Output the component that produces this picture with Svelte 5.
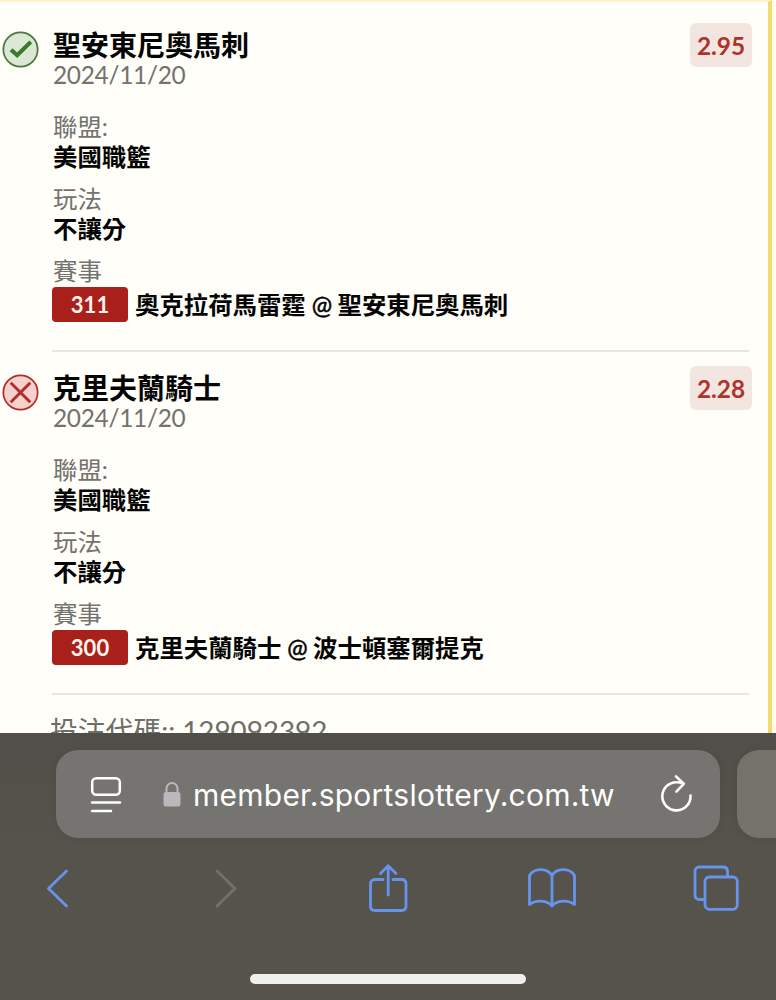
<script lang="ts">
    type Leg = {
        won: boolean;
        pick: string;
        date: string;
        league: string;
        play: string;
        code: string;
        away: string;
        home: string;
        odds: string;
    };

    const legs: Leg[] = [
        {
            won: true,
            pick: '聖安東尼奧馬刺',
            date: '2024/11/20',
            league: '美國職籃',
            play: '不讓分',
            code: '311',
            away: '奧克拉荷馬雷霆',
            home: '聖安東尼奧馬刺',
            odds: '2.95'
        },
        {
            won: false,
            pick: '克里夫蘭騎士',
            date: '2024/11/20',
            league: '美國職籃',
            play: '不讓分',
            code: '300',
            away: '克里夫蘭騎士',
            home: '波士頓塞爾提克',
            odds: '2.28'
        }
    ];
</script>

<div class="screen">
    <main class="slip">
        {#each legs as leg}
            <section class="leg">
                <svg class="status" class:lost={!leg.won} viewBox="0 0 36 36" aria-label={leg.won ? 'won' : 'lost'}>
                    <circle cx="18" cy="18" r="16.7" />
                    {#if leg.won}
                        <path class="check" d="M8.8 18.2 14.8 23.6 28 10.6" />
                    {:else}
                        <path d="M8.5 8.6 27.5 27.4M27.5 8.6 8.5 27.4" />
                    {/if}
                </svg>
                <div class="details">
                    <div class="head">
                        <div class="title">
                            <h2>{leg.pick}</h2>
                            <p class="date">{leg.date}</p>
                        </div>
                        <span class="odds">{leg.odds}</span>
                    </div>
                    <dl>
                        <dt>聯盟:</dt>
                        <dd>{leg.league}</dd>
                        <dt>玩法</dt>
                        <dd>{leg.play}</dd>
                        <dt>賽事</dt>
                        <dd class="match">
                            <span class="code">{leg.code}</span>
                            <span class="teams">{leg.away} <span class="at">@</span> {leg.home}</span>
                        </dd>
                    </dl>
                </div>
            </section>
        {/each}
        <p class="bet-code">投注代碼:: 129092392</p>
    </main>

    <footer class="browser">
        <div class="tabs">
            <div class="address">
                <svg class="reader" viewBox="0 0 32 38">
                    <rect x="2.2" y="2.2" width="27.6" height="16.6" rx="4" />
                    <path d="M2 26.5H30M2 35H21" />
                </svg>
                <svg class="lock" viewBox="0 0 18 26">
                    <rect x="0.5" y="11" width="17" height="14.5" rx="2.5" />
                    <path d="M3.5 12V7.5a5.5 5.5 0 0 1 11 0V12" />
                </svg>
                <span class="url">member.sportslottery.com.tw</span>
                <svg class="reload" viewBox="0 0 32 38">
                    <path d="M30.5 21.6A14.1 14.1 0 1 1 16.4 8.2Q20 8.2 23.6 9.8M16 2.4 23.8 9.8 16.4 17.6" />
                </svg>
            </div>
            <div class="next-tab"></div>
        </div>
        <nav class="tools">
            <svg class="back" viewBox="0 0 24 40"><path d="M20.5 3 2.5 20.5 20.5 38" /></svg>
            <svg class="forward" viewBox="0 0 24 40"><path d="M3 3 21 20.5 3 38" /></svg>
            <svg class="share" viewBox="0 0 40 50">
                <path d="M15 16.5H7Q2.5 16.5 2.5 21V43Q2.5 47.5 7 47.5H33.5Q38 47.5 38 43V21Q38 16.500 33.5 16.5H25" />
                <path d="M20.2 32V3M12.5 10.5 20.2 2.7 28 10.5" />
            </svg>
            <svg class="book" viewBox="0 0 50 42">
                <path d="M25 39C20 33 9 32.5 2.5 37.5V8.5C7 1 20 .5 25 8.5V39C30 33 41 32.5 47.5 37.5V8.5C43 1 30 .5 25 8.5" />
            </svg>
            <svg class="windows" viewBox="0 0 46 46">
                <path d="M11 34.5H6.5Q2 34.5 2 30V6.5Q2 2 6.5 2H30Q34.5 2 34.5 6.5V11" />
                <rect x="12" y="12" width="32.3" height="32.3" rx="4.5" />
            </svg>
        </nav>
        <div class="home-bar"></div>
    </footer>
</div>

<style>
    :global(body) {
        margin: 0;
        background: #55534b;
    }

    .screen {
        display: flex;
        flex-direction: column;
        width: 776px;
        height: 1000px;
        overflow: hidden;
        font-family: Lato, 'Noto Sans CJK TC', sans-serif;
        font-size: 24.4px;
        line-height: 30px;
    }

    h2,
    p,
    dl,
    dd {
        margin: 0;
    }

    svg {
        display: block;
        flex: none;
        fill: none;
    }

    .slip {
        box-sizing: border-box;
        width: 772px;
        height: 733px;
        padding: 7px 20px 0 2px;
        overflow: hidden;
        background: #fffef8;
        border-top: 2px solid #fff0d2;
        border-right: 4px solid #f3dc6c;
        box-shadow: 5px 0 0 #fffdf0;
        flex: none;
    }

    .leg {
        display: flex;
        gap: 13px;
        height: 343px;
    }

    .status {
        width: 37px;
        height: 37px;
        margin-top: 22px;
        stroke: #487a3c;
        stroke-width: 1.7;
    }

    .status circle {
        fill: #dce7d6;
    }

    .status .check {
        stroke: #387b29;
        stroke-width: 4;
    }

    .status.lost {
        stroke: #b42c29;
    }

    .status.lost circle {
        fill: #f3d2ce;
    }

    .status.lost path {
        stroke-width: 2.8;
    }

    .details {
        box-sizing: border-box;
        width: 697px;
        height: 343px;
        padding-top: 20px;
        border-bottom: 2px solid #e7e6e1;
        flex: none;
    }

    .head {
        display: flex;
        justify-content: space-between;
        height: 83px;
    }

    .title,
    dt,
    dd {
        padding-left: 1px;
    }

    h2 {
        font-size: 28px;
        font-weight: 700;
        line-height: 32px;
        color: #050505;
    }

    .date {
        letter-spacing: -0.28px;
        line-height: 27px;
    }

    .date,
    dt {
        color: #72726f;
    }

    .odds {
        width: 62px;
        height: 44px;
        margin: -6px -3px 0 0;
        border-radius: 6px;
        background: #f3e6e1;
        color: #ad342c;
        font-weight: 700;
        line-height: 45px;
        text-align: center;
    }

    dd {
        margin-bottom: 12px;
        color: #050505;
        font-weight: 700;
    }

    .match {
        display: flex;
        align-items: center;
        gap: 7px;
        height: 35px;
        margin: 1px 0 0;
        padding: 0;
    }

    .code {
        width: 76px;
        height: 35px;
        border-radius: 4px;
        background: #a82019;
        color: #fff3ee;
        font-size: 22px;
        line-height: 36px;
        text-align: center;
    }

    .teams {
        padding-top: 1px;
    }

    .at {
        margin-right: -0.5px;
        font-weight: 400;
        -webkit-text-stroke: 0.5px #050505;
    }

    .bet-code {
        margin: 19px 0 0 48px;
        color: #6d6d6a;
        font-size: 27.8px;
        line-height: 34px;
        white-space: nowrap;
    }

    .browser {
        height: 267px;
        background: linear-gradient(#514f49, #55534b 45%, #56544a);
        flex: none;
    }

    .tabs {
        display: flex;
        gap: 17px;
        padding: 17px 0 0 56px;
    }

    .address,
    .next-tab {
        height: 88px;
        background: #757470;
        border-radius: 22px;
        box-shadow: 0 0 8px rgba(0, 0, 0, 0.07);
        flex: none;
    }

    .address {
        display: flex;
        align-items: center;
        box-sizing: border-box;
        width: 664px;
        padding: 0 28px 0 34px;
    }

    .next-tab {
        width: 80px;
        background: #74736b;
    }

    .reader {
        width: 32px;
        height: 38px;
        margin-top: 2px;
        stroke: #fff;
        stroke-width: 2.5;
        stroke-linecap: round;
    }

    .lock {
        width: 18px;
        height: 26px;
        margin: 0 12px 0 41px;
        stroke: #bab8bd;
        stroke-width: 2;
    }

    .lock rect {
        fill: #bab8bd;
        stroke: none;
    }

    .url {
        flex: 1;
        padding-top: 1px;
        color: #fff;
        font-family: Inter, sans-serif;
        font-size: 30px;
        letter-spacing: 0.24px;
        line-height: 40px;
        white-space: nowrap;
    }

    .reload {
        width: 32px;
        height: 38px;
        margin-top: -3px;
        stroke: #fff;
        stroke-width: 2.6;
        stroke-linecap: round;
        stroke-linejoin: round;
    }

    .tools {
        display: flex;
        align-items: center;
        height: 100px;
        padding-left: 46px;
        stroke: #6694ed;
        stroke-width: 2.8;
        stroke-linecap: round;
        stroke-linejoin: round;
    }

    .back,
    .forward {
        width: 24px;
        height: 40px;
    }

    .forward {
        margin: 0 130px 0 144px;
        stroke: #73716a;
    }

    .share {
        width: 40px;
        height: 50px;
    }

    .book {
        width: 50px;
        height: 42px;
        margin: 0 116px 0 119px;
    }

    .windows {
        width: 46px;
        height: 46px;
    }

    .home-bar {
        width: 276px;
        height: 10px;
        margin: 36px auto 0;
        border-radius: 5px;
        background: #efefed;
    }
</style>
